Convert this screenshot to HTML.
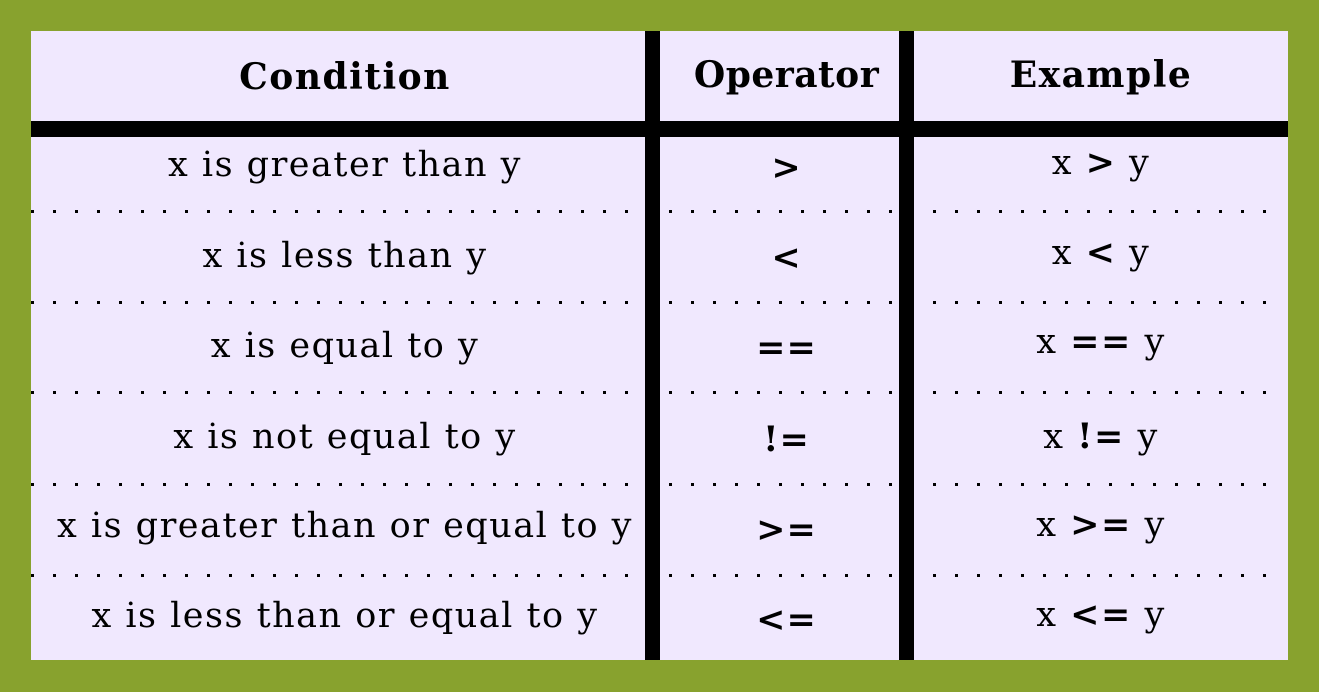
<!DOCTYPE html>
<html><head><style>
body{margin:0;width:1319px;height:692px;background:#88a22e;position:relative;overflow:hidden;font-family:"DejaVu Serif","Liberation Serif",serif;}
#t{position:absolute;left:31px;top:31px;width:1257px;height:629px;background:#f0e8fe;}
.v{position:absolute;top:0;height:629px;width:15px;background:#000;}
.h{position:absolute;left:0;width:1257px;top:90px;height:16px;background:#000;}
.d{position:absolute;left:0;width:1250px;height:3px;background-image:linear-gradient(90deg,#000 3px,transparent 3px);background-size:22px 3px;}
.c{position:absolute;text-align:center;font-size:35px;line-height:40px;white-space:nowrap;color:#000;letter-spacing:1.5px;}
.b{font-weight:bold;font-size:35px;letter-spacing:1px;}
.hd{font-size:36px;letter-spacing:1.5px;}
</style></head><body>
<div id="t">
<div class="d" style="top:179px"></div>
<div class="d" style="top:270px"></div>
<div class="d" style="top:360px"></div>
<div class="d" style="top:452px"></div>
<div class="d" style="top:543px"></div>
<div class="v" style="left:614px"></div>
<div class="v" style="left:868px"></div>
<div class="h"></div>
</div>
<div class="c b hd" style="left:31px;width:628px;top:57px">Condition</div>
<div class="c b hd" style="left:659px;width:255px;top:55px;letter-spacing:0.5px">Operator</div>
<div class="c b hd" style="left:914px;width:374px;top:55px">Example</div>
<div class="c" style="left:31px;width:628px;top:145px">x is greater than y</div>
<div class="c" style="left:31px;width:628px;top:236px">x is less than y</div>
<div class="c" style="left:31px;width:628px;top:326px">x is equal to y</div>
<div class="c" style="left:31px;width:628px;top:417px">x is not equal to y</div>
<div class="c" style="left:31px;width:628px;top:506px">x is greater than or equal to y</div>
<div class="c" style="left:31px;width:628px;top:596px">x is less than or equal to y</div>
<div class="c b" style="left:659px;width:255px;top:148px">&gt;</div>
<div class="c b" style="left:659px;width:255px;top:238px">&lt;</div>
<div class="c b" style="left:659px;width:255px;top:328px">==</div>
<div class="c b" style="left:659px;width:255px;top:420px">!=</div>
<div class="c b" style="left:659px;width:255px;top:510px">&gt;=</div>
<div class="c b" style="left:659px;width:255px;top:600px">&lt;=</div>
<div class="c" style="left:914px;width:374px;top:143px">x <b>&gt;</b> y</div>
<div class="c" style="left:914px;width:374px;top:233px">x <b>&lt;</b> y</div>
<div class="c" style="left:914px;width:374px;top:322px">x <b>==</b> y</div>
<div class="c" style="left:914px;width:374px;top:417px">x <b>!=</b> y</div>
<div class="c" style="left:914px;width:374px;top:505px">x <b>&gt;=</b> y</div>
<div class="c" style="left:914px;width:374px;top:595px">x <b>&lt;=</b> y</div>
</body></html>
